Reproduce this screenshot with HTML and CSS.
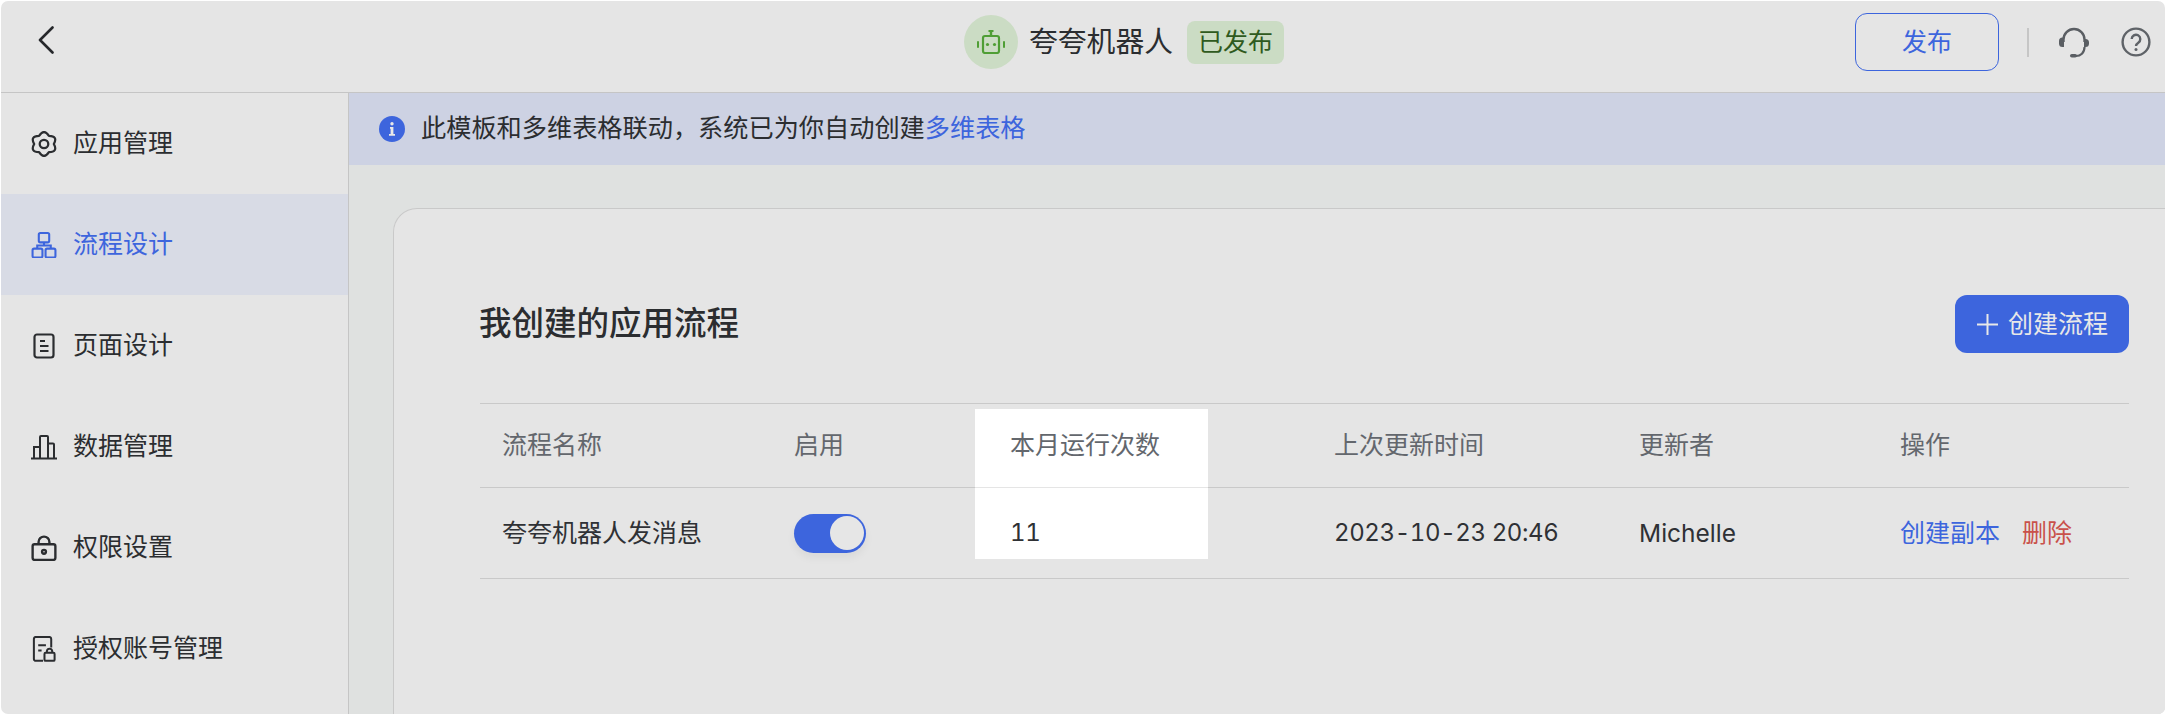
FILE: index.html
```html
<!DOCTYPE html>
<html lang="zh-CN">
<head>
<meta charset="utf-8">
<title>夸夸机器人</title>
<link rel="stylesheet" href="styles.css">
</head>
<body>
<div class="app">
  <header class="topbar">
    <div class="top-left">
      <svg class="back" viewBox="0 0 16 28" width="16" height="28"><path d="M14.500 1.500 2 14l12.500 12.500" fill="none" stroke="#26282b" stroke-width="2.600" stroke-linecap="round" stroke-linejoin="round"/></svg>
    </div>
    <div class="top-title">
      <span class="avatar">
        <svg viewBox="0 0 28 24" width="28" height="24"><g fill="#4f9e35"><rect x="12.800" y="0" width="2.400" height="6"/><rect x="11.500" y="0" width="5" height="2"/><rect x="0" y="11" width="2" height="7" rx="1"/><rect x="26" y="11" width="2" height="7" rx="1"/><circle cx="10.500" cy="14.500" r="1.600"/><circle cx="17.500" cy="14.500" r="1.600"/></g><rect x="6" y="6" width="16" height="17" rx="2" fill="none" stroke="#4f9e35" stroke-width="2.200"/></svg>
      </span>
      <span class="app-name">夸夸机器人</span>
      <span class="tag">已发布</span>
    </div>
    <div class="top-actions">
      <button class="publish">发布</button>
      <span class="vline"></span>
      <svg class="headset" viewBox="0 0 30 31" width="30" height="31"><path d="M4.500 15V12.500a10.500 10.500 0 0 1 21 0V15" fill="none" stroke="#5a5e63" stroke-width="2.400"/><path d="M5 10.500v9.500H3.500A3.500 3.500 0 0 1 0 16.500V14a3.500 3.500 0 0 1 3.500-3.500z" fill="#5a5e63"/><path d="M25 12h1.500A3.500 3.500 0 0 1 30 15.500v1A3.500 3.500 0 0 1 26.500 20H25z" fill="#5a5e63"/><path d="M25.500 20c0 6-4 9-8.500 9" fill="none" stroke="#5a5e63" stroke-width="2.200"/><rect x="11" y="27" width="7" height="3.600" rx="1.800" fill="#5a5e63"/></svg>
      <svg class="help" viewBox="0 0 30 30" width="30" height="30"><circle cx="15" cy="15" r="13.400" fill="none" stroke="#5f6368" stroke-width="2.400"/><path d="M10.700 12a4.300 4.300 0 1 1 6.600 3.700c-1.500 1-2.300 1.700-2.300 3.300" fill="none" stroke="#5f6368" stroke-width="2.400"/><circle cx="15" cy="22.600" r="1.500" fill="#5f6368"/></svg>
    </div>
  </header>
  <div class="body">
    <nav class="sidebar">
      <a class="nav-item">
        <svg class="nav-icon" viewBox="0.500 0 23 24" preserveAspectRatio="none"><path d="M20.700 12Q24.560 4.750 16.350 4.470 12-2.500 7.650 4.470-.56 4.750 3.300 12-.56 19.250 7.650 19.530 12 26.500 16.350 19.530 24.560 19.250 20.700 12Z" fill="none" stroke="#2b2d30" stroke-width="2" stroke-linejoin="round"/><circle cx="12" cy="12" r="3.800" fill="none" stroke="#2b2d30" stroke-width="2"/></svg>
        <span>应用管理</span>
      </a>
      <a class="nav-item active">
        <svg class="nav-icon" viewBox="0 0 24 25"><g fill="none" stroke="#3d65dd" stroke-width="2"><rect x="7" y="1" width="10" height="9" rx="1.500"/><rect x="1" y="16" width="9.500" height="8.500" rx="1.500"/><rect x="13.500" y="16" width="9.500" height="8.500" rx="1.500"/><path d="M12 10v3M5.500 16v-3h13v3"/></g></svg>
        <span>流程设计</span>
      </a>
      <a class="nav-item">
        <svg class="nav-icon" viewBox="0 0 24 26"><g fill="none" stroke="#2b2d30" stroke-width="2.200"><rect x="2.500" y="1.500" width="19" height="23" rx="2.500"/><path d="M8 8h5M8 13h8.500M8 18h8.500"/></g></svg>
        <span>页面设计</span>
      </a>
      <a class="nav-item">
        <svg class="nav-icon" viewBox="0 0 26 25"><g fill="none" stroke="#2b2d30" stroke-width="2"><path d="M0 24h26"/><path d="M3 24V12.500h6M9 24V2.500a1 1 0 0 1 1-1h6a1 1 0 0 1 1 1V24M17 9h5a1 1 0 0 1 1 1v14"/></g></svg>
        <span>数据管理</span>
      </a>
      <a class="nav-item">
        <svg class="nav-icon" viewBox="0 0 24 24"><g fill="none" stroke="#2b2d30" stroke-width="2.200"><rect x="1.500" y="8.500" width="21" height="14.500" rx="1.800"/><path d="M7 8.500V6.500a5 5 0 0 1 10 0v2"/><circle cx="12" cy="15.500" r="1.800"/></g></svg>
        <span>权限设置</span>
      </a>
      <a class="nav-item">
        <svg class="nav-icon" viewBox="0 0 24 27"><g fill="none" stroke="#2b2d30" stroke-width="2.100"><path d="M11 25.800H3.500a2 2 0 0 1-2-2V3a2 2 0 0 1 2-2h14a2 2 0 0 1 2 2v9"/><path d="M6 9.500h8M6 15h3.500"/><rect x="12.500" y="17.500" width="10.500" height="8.300" rx="1.200"/><path d="M15 17.500V15.500a2.800 2.800 0 0 1 5.500 0v2"/></g></svg>
        <span>授权账号管理</span>
      </a>
    </nav>
    <main class="main">
      <div class="banner">
        <svg class="info" viewBox="0 0 26 26" width="26" height="26"><circle cx="13" cy="13" r="13" fill="#3d65dd"/><circle cx="13" cy="7.800" r="1.700" fill="#e8e8e8"/><path d="M11 11h3.400v7H16v1.800h-6V18h1.600v-5.200H11z" fill="#e8e8e8"/></svg>
        <span>此模板和多维表格联动，系统已为你自动创建<a class="link">多维表格</a></span>
      </div>
      <section class="card">
        <div class="card-head">
          <h1>我创建的应用流程</h1>
          <button class="create"><svg viewBox="0 0 21 21" width="21" height="21"><path d="M10.500 0v21M0 10.500h21" stroke="#e8e8e8" stroke-width="2"/></svg>创建流程</button>
        </div>
        <div class="table">
          <div class="spot"><i class="spot-line"></i></div>
          <div class="row head">
            <span>流程名称</span><span>启用</span><span class="over">本月运行次数</span><span>上次更新时间</span><span>更新者</span><span>操作</span>
          </div>
          <div class="row data">
            <span>夸夸机器人发消息</span>
            <span><i class="toggle"><i class="thumb"></i></i></span>
            <span class="over num">11</span>
            <span class="num">2023-10-23 20:46</span>
            <span class="latin">Michelle</span>
            <span class="ops"><a class="link">创建副本</a><a class="del">删除</a></span>
          </div>
        </div>
      </section>
    </main>
  </div>
</div>
</body>
</html>
```
FILE: styles.css
```css
* { box-sizing: border-box; }
html, body { margin: 0; height: 716px; overflow: hidden; background: #fff; }
body { padding: 1px 1px 2px 1px; font-family: Inter, "Noto Sans CJK SC", sans-serif; font-size: 25px; line-height: 1; color: #2f3135; }
.app { height: 713px; background: #e5e5e5; border-radius: 7px; overflow: hidden; display: flex; flex-direction: column; }

.topbar { height: 92px; flex: none; display: flex; align-items: center; padding-bottom: 9px; border-bottom: 1px solid #c5c5c5; }
.top-left { width: 963px; padding-left: 37px; display: flex; align-items: center; margin-bottom: 4px; }
.top-title { display: flex; align-items: center; }
.avatar { width: 54px; height: 54px; border-radius: 50%; background: #cbdcc4; display: flex; align-items: center; justify-content: center; }
.app-name { font-size: 28.800px; margin-left: 11px; color: #2b2d30; }
.tag { margin-left: 14px; height: 43px; width: 97px; border-radius: 8px; background: #cbdcc4; color: #2f5a20; display: flex; align-items: center; justify-content: center; }
.top-actions { margin-left: auto; display: flex; align-items: center; padding-right: 14px; }
.publish { width: 144px; height: 58px; border: 1.500px solid #3d65dd; border-radius: 12px; background: transparent; color: #3d65dd; font: inherit; padding: 0; }
.vline { width: 2px; height: 29px; background: #c6c6c6; margin-left: 28px; margin-right: 30px; }
.help { margin-left: 32px; }

.body { flex: 1; display: flex; min-height: 0; }
.sidebar { width: 348px; flex: none; border-right: 1px solid #c5c5c5; }
.nav-item { height: 101px; display: flex; align-items: center; gap: 16px; padding-left: 30px; color: #2b2d30; }
.nav-item.active { background: #d8dbe5; color: #3d65dd; }
.nav-icon { width: 26px; height: 26px; flex: none; }

.main { flex: 1; min-width: 0; background: #dfe1e0; }
.banner { height: 72px; background: #cdd2e3; display: flex; align-items: center; padding-left: 30px; gap: 16px; color: #2b2d30; font-size: 25.200px; }
.link { color: #3d65dd; }
.del { color: #c9514a; margin-left: 22px; }

.card { height: 506px; margin: 43px 0 0 44px; padding: 86px 36px 0 86px; background: #e5e5e5; border-top: 1px solid #c9c9c9; border-left: 1px solid #c9c9c9; border-top-left-radius: 24px; }
.card-head { height: 58px; display: flex; align-items: center; justify-content: space-between; }
h1 { margin: 0 0 0 -1px; font-size: 32.500px; font-weight: 500; color: #2b2d30; }
.create { width: 174px; height: 58px; border: 0; border-radius: 12px; background: #3d65dd; color: #e8e8e8; font: inherit; padding: 0 0 0 22px; display: flex; align-items: center; gap: 10px; }

.table { position: relative; margin-top: 50px; border-top: 1px solid #c9c9c9; }
.row { display: grid; grid-template-columns: 292px 216px 324px 305px 261px 1fr; padding-left: 22px; align-items: center; border-bottom: 1px solid #c9c9c9; }
.row.head { height: 84px; color: #63676d; }
.row.data { height: 91px; }
.num { font-size: 24px; font-variant-numeric: tabular-nums; letter-spacing: -.4px; }
.latin { font-size: 24.500px; }
.over { position: relative; z-index: 1; }
.spot { position: absolute; left: 495px; top: 5px; width: 233px; height: 150px; background: #fff; }
.spot-line { display: block; position: absolute; left: 0; right: 0; top: 78px; height: 1px; background: #e5e5e5; }

.toggle { display: block; position: relative; width: 72px; height: 39px; border-radius: 20px; background: #3d65dd; box-shadow: 0 5px 8px rgba(0,0,0,.05); }
.thumb { position: absolute; right: 2px; top: 2.500px; width: 34px; height: 34px; border-radius: 50%; background: #e6e6e6; }
```
